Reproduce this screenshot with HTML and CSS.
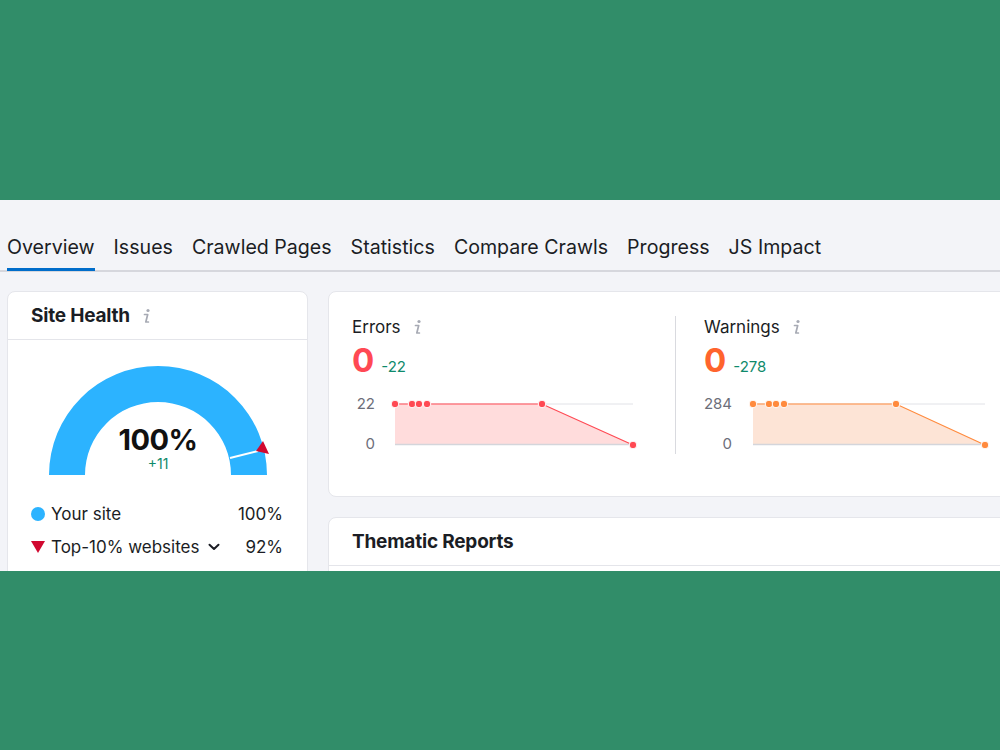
FILE: index.html
```html
<!DOCTYPE html>
<html lang="en">
<head>
    <meta charset="UTF-8">
    <meta name="viewport" content="width=device-width, initial-scale=1.0">
    <title>Site Audit Overview</title>
    <link rel="stylesheet" href="styles.css">
</head>
<body>
    <div class="shot">
        <nav class="tabs">
            <a href="#" class="tab active">Overview</a>
            <a href="#" class="tab">Issues</a>
            <a href="#" class="tab">Crawled Pages</a>
            <a href="#" class="tab">Statistics</a>
            <a href="#" class="tab">Compare Crawls</a>
            <a href="#" class="tab">Progress</a>
            <a href="#" class="tab">JS Impact</a>
        </nav>

        <div class="content">
            <!-- Site Health -->
            <div class="card health">
                <div class="card-head">
                    <h2>Site Health</h2>
                    <svg class="info" width="9" height="16" viewBox="0 0 9 16"><circle cx="6" cy="2.5" r="1.6" fill="#a7aab4"/><path d="M2.5 6.5h3.2l-1.9 7.5h2.6" fill="none" stroke="#a7aab4" stroke-width="1.7" stroke-linecap="round" stroke-linejoin="round"/></svg>
                </div>
                <svg class="gauge" width="299" height="150" viewBox="0 0 299 150">
                    <path d="M41 135 A109 109 0 0 1 259 135 L223 135 A73 73 0 0 0 77 135 Z" fill="#2cb3ff"/>
                    <line x1="222" y1="118" x2="250" y2="111" stroke="#fff" stroke-width="2"/>
                    <polygon points="255,101 248,111 261,114" fill="#d10930"/>
                    <text x="150" y="110" text-anchor="middle" class="gauge-value">100%</text>
                    <text x="150" y="129" text-anchor="middle" class="gauge-delta">+11</text>
                </svg>
                <div class="legend">
                    <div class="legend-row">
                        <span class="dot"></span>
                        <span class="legend-name">Your site</span>
                        <span class="legend-value">100%</span>
                    </div>
                    <div class="legend-row">
                        <span class="tri"></span>
                        <span class="legend-name">Top-10% websites</span>
                        <svg class="chev" width="12" height="8" viewBox="0 0 12 8"><path d="M1.5 1.8l4.5 4.2 4.5-4.2" fill="none" stroke="#1b1d24" stroke-width="2" stroke-linecap="round" stroke-linejoin="round"/></svg>
                        <span class="legend-value">92%</span>
                    </div>
                </div>
            </div>

            <div class="right">
                <!-- Errors / Warnings -->
                <div class="card issues">
                    <div class="metric">
                        <div class="metric-title">Errors
                            <svg class="info" width="9" height="16" viewBox="0 0 9 16"><circle cx="6" cy="2.5" r="1.6" fill="#a7aab4"/><path d="M2.5 6.5h3.2l-1.9 7.5h2.6" fill="none" stroke="#a7aab4" stroke-width="1.7" stroke-linecap="round" stroke-linejoin="round"/></svg>
                        </div>
                        <div class="metric-value"><span class="num red">0</span><span class="delta">-22</span></div>
                        <svg class="chart" width="300" height="62" viewBox="0 0 300 62">
                            <text x="23" y="17" text-anchor="end" class="axis">22</text>
                            <text x="23" y="57" text-anchor="end" class="axis">0</text>
                            <line x1="43" y1="12" x2="281" y2="12" stroke="#e1e2e7" stroke-width="1"/>
                            <path d="M43 12 L190 12 L281 53 L281 52 L43 52 Z" fill="#ffdcdc"/>
                            <line x1="43" y1="52.5" x2="281" y2="52.5" stroke="#d4d5db" stroke-width="1.5"/>
                            <polyline points="43,12 190,12 281,53" fill="none" stroke="#ff4953" stroke-width="1.2"/>
                            <g fill="#ff4953" stroke="#fff" stroke-width="1">
                                <circle cx="43" cy="12" r="3.8"/>
                                <circle cx="60" cy="12" r="3.8"/>
                                <circle cx="67" cy="12" r="3.8"/>
                                <circle cx="75" cy="12" r="3.8"/>
                                <circle cx="190" cy="12" r="3.8"/>
                                <circle cx="281" cy="53" r="3.8"/>
                            </g>
                        </svg>
                    </div>
                    <div class="metric split">
                        <div class="metric-title">Warnings
                            <svg class="info" width="9" height="16" viewBox="0 0 9 16"><circle cx="6" cy="2.5" r="1.6" fill="#a7aab4"/><path d="M2.5 6.5h3.2l-1.9 7.5h2.6" fill="none" stroke="#a7aab4" stroke-width="1.7" stroke-linecap="round" stroke-linejoin="round"/></svg>
                        </div>
                        <div class="metric-value"><span class="num orange">0</span><span class="delta">-278</span></div>
                        <svg class="chart" width="300" height="62" viewBox="0 0 300 62">
                            <text x="28" y="17" text-anchor="end" class="axis">284</text>
                            <text x="28" y="57" text-anchor="end" class="axis">0</text>
                            <line x1="49" y1="12" x2="281" y2="12" stroke="#e1e2e7" stroke-width="1"/>
                            <path d="M49 12 L192 12 L281 53 L281 52 L49 52 Z" fill="#fde4d6"/>
                            <line x1="49" y1="52.5" x2="281" y2="52.5" stroke="#d4d5db" stroke-width="1.5"/>
                            <polyline points="49,12 192,12 281,53" fill="none" stroke="#ff8a3d" stroke-width="1.2"/>
                            <g fill="#ff8a3d" stroke="#fff" stroke-width="1">
                                <circle cx="49" cy="12" r="3.8"/>
                                <circle cx="65" cy="12" r="3.8"/>
                                <circle cx="72" cy="12" r="3.8"/>
                                <circle cx="80" cy="12" r="3.8"/>
                                <circle cx="192" cy="12" r="3.8"/>
                                <circle cx="281" cy="53" r="3.8"/>
                            </g>
                        </svg>
                    </div>
                </div>

                <!-- Thematic Reports -->
                <div class="card thematic">
                    <div class="card-head">
                        <h2>Thematic Reports</h2>
                    </div>
                </div>
            </div>
        </div>
    </div>
</body>
</html>
```

FILE: styles.css
```css
body {
    margin: 0;
    padding: 0;
    background: #318d69;
    font-family: Inter, "Noto Sans", Arial, sans-serif;
    color: #1b1d24;
    height: 750px;
    overflow: hidden;
}

.shot {
    margin-top: 200px;
    height: 371px;
    background: #f3f4f8;
    overflow: hidden;
}

/* Tabs */
.tabs {
    display: flex;
    gap: 19px;
    padding: 35px 0 0 7px;
    border-bottom: 2px solid #d6d7dd;
}

.tab {
    display: block;
    font-size: 19.6px;
    line-height: 24px;
    padding-bottom: 9px;
    margin-bottom: -1px;
    border-bottom: 3px solid transparent;
    color: #1b1d24;
    text-decoration: none;
}

.tab.active {
    border-bottom-color: #006dca;
}

/* Layout */
.content {
    display: flex;
    gap: 20px;
    padding: 19px 0 0 7px;
}

.right {
    display: flex;
    flex-direction: column;
    gap: 20px;
    width: 700px;
    flex-shrink: 0;
}

.card {
    background: #fff;
    border: 1px solid #e5e6eb;
    border-radius: 8px;
    box-sizing: border-box;
}

.card-head {
    display: flex;
    align-items: center;
    gap: 12px;
    height: 47px;
    padding: 0 23px;
    border-bottom: 1px solid #e4e5ea;
}

.card-head h2 {
    margin: 0;
    font-size: 19px;
    font-weight: 700;
    letter-spacing: -0.2px;
}

.info {
    display: inline-block;
    vertical-align: middle;
}

/* Site Health */
.health {
    width: 301px;
    height: 300px;
    flex-shrink: 0;
}

.gauge {
    display: block;
}

.gauge-value {
    font-size: 29px;
    font-weight: 700;
    fill: #111;
    letter-spacing: -0.5px;
}

.gauge-delta {
    font-size: 14px;
    fill: #0f8a6b;
}

.legend {
    padding: 7px 24px 0 23px;
}

.legend-row {
    display: flex;
    align-items: center;
    height: 33px;
    font-size: 17px;
}

.dot {
    width: 14px;
    height: 14px;
    border-radius: 50%;
    background: #2cb3ff;
    margin-right: 6px;
}

.tri {
    width: 0;
    height: 0;
    border-left: 7px solid transparent;
    border-right: 7px solid transparent;
    border-top: 12px solid #d10930;
    margin-right: 6px;
}

.chev {
    margin-left: 9px;
}

.legend-value {
    margin-left: auto;
}

/* Errors / Warnings */
.issues {
    display: flex;
    height: 206px;
}

.metric {
    width: 346px;
    padding: 24px 0 0 23px;
    box-sizing: border-box;
}

.metric.split {
    position: relative;
    padding-left: 29px;
}

.metric.split::before {
    content: "";
    position: absolute;
    left: 0;
    top: 24px;
    height: 138px;
    border-left: 1.5px solid #d9dadf;
}

.metric-title {
    display: flex;
    align-items: center;
    gap: 12px;
    font-size: 17px;
    line-height: 22px;
}

.metric-value {
    display: flex;
    align-items: baseline;
    gap: 7px;
    margin-top: 2px;
    height: 44px;
}

.num {
    font-size: 33px;
    font-weight: 700;
    line-height: 40px;
}

.red {
    color: #ff4953;
}

.orange {
    color: #ff642d;
}

.delta {
    font-size: 15px;
    color: #0f8a6b;
}

.chart {
    display: block;
    margin-top: 8px;
}

.axis {
    font-size: 15px;
    fill: #6c6e79;
}

/* Thematic Reports */
.thematic {
    height: 120px;
}
```
